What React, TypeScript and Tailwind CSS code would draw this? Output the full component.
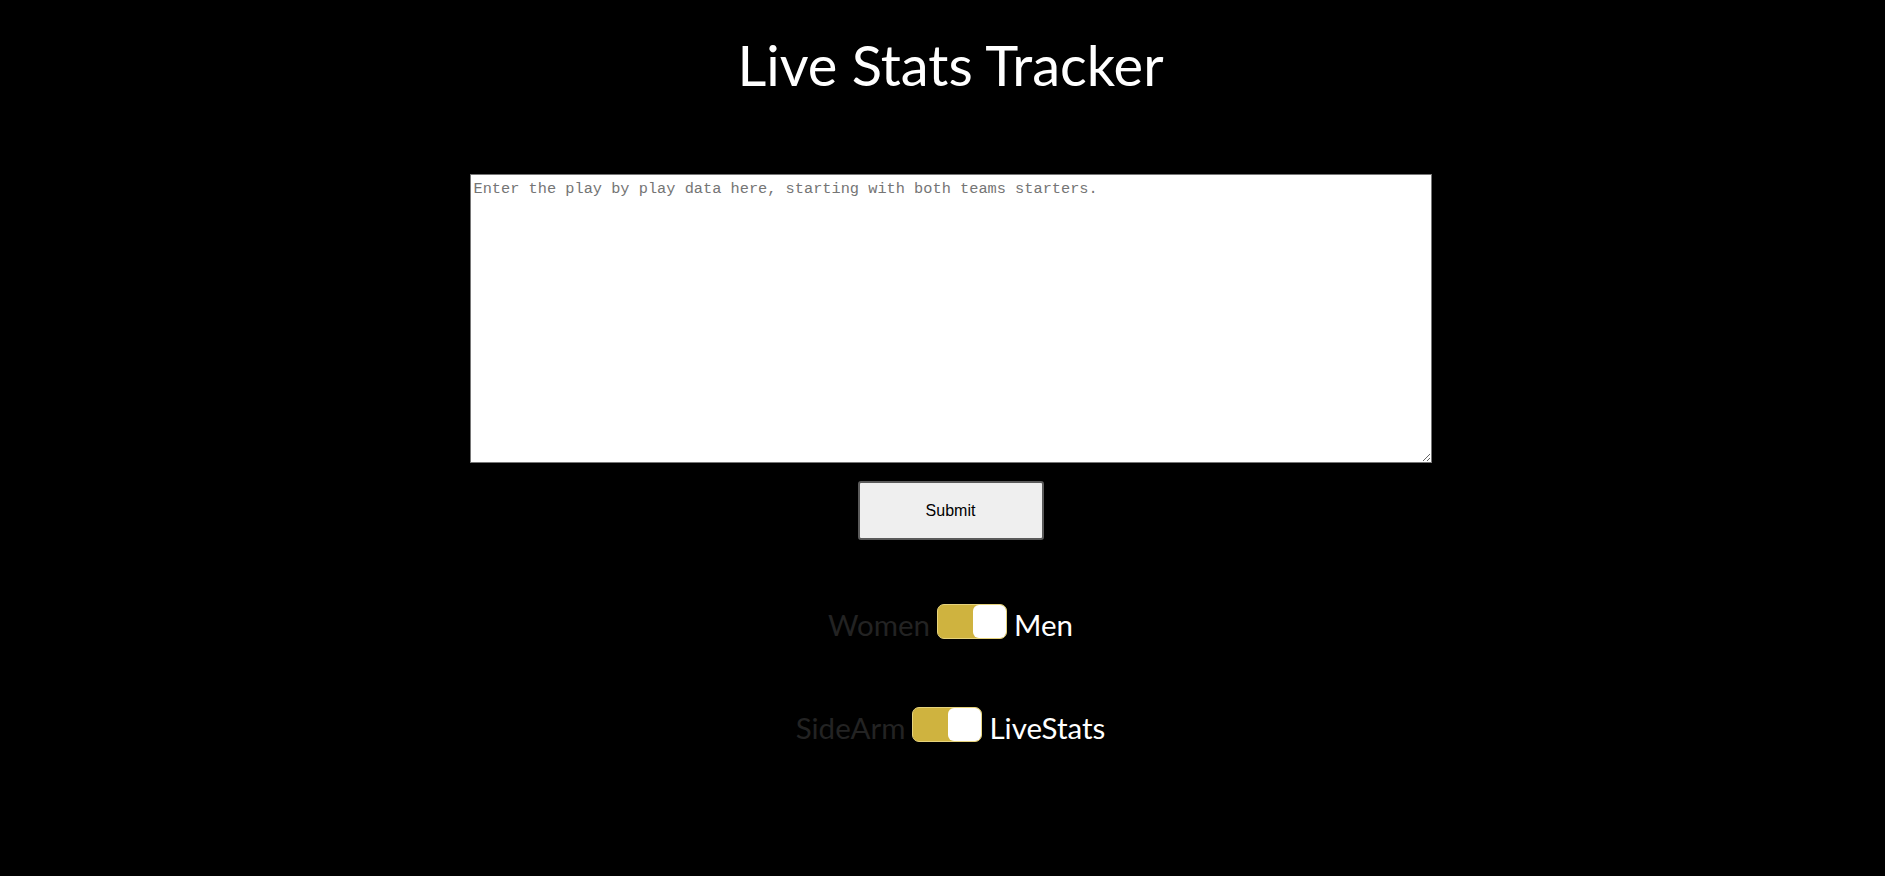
import { useState } from 'react';

function Toggle({ left, right, on, onToggle }: { left: string; right: string; on: boolean; onToggle: () => void }) {
  return (
    <div className="flex items-center gap-[7px] text-[29.5px] leading-none">
      <span className={`pt-[6px] ${on ? 'text-[#232323]' : 'text-white'}`}>{left}</span>
      <button
        type="button"
        onClick={onToggle}
        className="relative w-[70px] h-[35px] rounded-[7px] bg-[#cfb33f] border border-[#e6d37c] cursor-pointer"
      >
        <span
          className={`absolute top-[0px] w-[33px] h-[33px] rounded-[6px] bg-white ${on ? 'right-[0px]' : 'left-[0px]'}`}
        />
      </button>
      <span className={`pt-[6px] ${on ? 'text-white' : 'text-[#232323]'}`}>{right}</span>
    </div>
  );
}

export default function App() {
  const [men, setMen] = useState(true);
  const [liveStats, setLiveStats] = useState(true);

  return (
    <div className="min-h-screen w-full bg-black pl-[16px] font-['Lato','Open_Sans',sans-serif]">
      <div className="flex flex-col items-center">
        <h1 className="pt-[37px] text-[56px] leading-none text-white">Live Stats Tracker</h1>

        <textarea
          className="mt-[81px] w-[962px] h-[289px] bg-white border border-[#767676] px-[3px] pt-[4px] text-black font-['Liberation_Mono',monospace] text-[15.3px] leading-[20px] placeholder:text-[#757575] outline-none"
          placeholder="Enter the play by play data here, starting with both teams starters."
        />

        <button
          type="button"
          className="mt-[18px] w-[186px] h-[59px] bg-[#efefef] border-2 border-[#5a5a5a] rounded-[3px] text-black text-[16px] font-['Liberation_Sans',Arial,sans-serif]"
        >
          Submit
        </button>

        <div className="mt-[64px]">
          <Toggle left="Women" right="Men" on={men} onToggle={() => setMen(!men)} />
        </div>
        <div className="mt-[67px]">
          <Toggle left="SideArm" right="LiveStats" on={liveStats} onToggle={() => setLiveStats(!liveStats)} />
        </div>
      </div>
    </div>
  );
}
